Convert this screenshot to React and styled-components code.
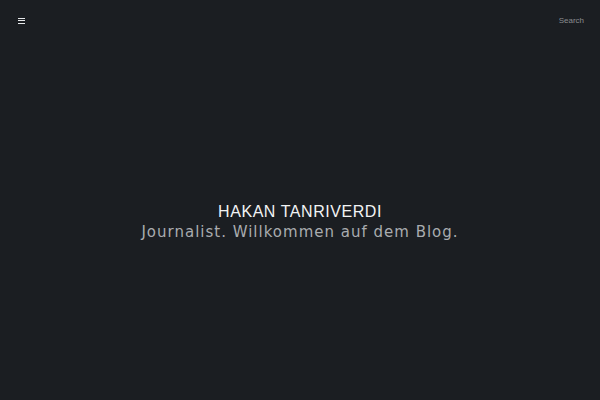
import React from "react";
import styled, { createGlobalStyle } from "styled-components";

const Global = createGlobalStyle`
  html, body { margin: 0; padding: 0; background: #1b1e22; }
  #root { height: 400px; }
`;

const Page = styled.div`
  height: 400px;
  display: flex;
  flex-direction: column;
  background: #1b1e22;
  font-family: "DejaVu Sans", sans-serif;
`;

const TopBar = styled.header`
  display: flex;
  justify-content: space-between;
  align-items: center;
  height: 41px;
  padding: 0 16px 0 18px;
`;

const MenuButton = styled.button`
  background: none;
  border: 0;
  padding: 0;
  width: 7px;
  height: 6px;
  display: flex;
  flex-direction: column;
  justify-content: space-between;
  cursor: pointer;
`;

const Bar = styled.span`
  display: block;
  height: 1px;
  background: #e6e8ea;
`;

const SearchLink = styled.span`
  font-family: "Liberation Sans", Arial, sans-serif;
  font-size: 8px;
  color: #8a8d90;
`;

const Hero = styled.main`
  flex: 1;
  display: flex;
  flex-direction: column;
  align-items: center;
  justify-content: center;
  padding-top: 3px;
`;

const Title = styled.h1`
  margin: 0;
  font-family: "Liberation Sans", Arial, sans-serif;
  font-weight: normal;
  font-size: 16px;
  letter-spacing: 0.55px;
  color: #f2f3f4;
  line-height: 20px;
`;

const Subtitle = styled.p`
  margin: 0;
  font-family: "DejaVu Sans", sans-serif;
  font-size: 15px;
  letter-spacing: 1px;
  color: #a9acaf;
  line-height: 20px;
`;

export default function App() {
  return (
    <>
      <Global />
      <Page>
        <TopBar>
          <MenuButton aria-label="Menu">
            <Bar />
            <Bar />
            <Bar />
          </MenuButton>
          <SearchLink>Search</SearchLink>
        </TopBar>
        <Hero>
          <Title>HAKAN TANRIVERDI</Title>
          <Subtitle>Journalist. Willkommen auf dem Blog.</Subtitle>
        </Hero>
      </Page>
    </>
  );
}
